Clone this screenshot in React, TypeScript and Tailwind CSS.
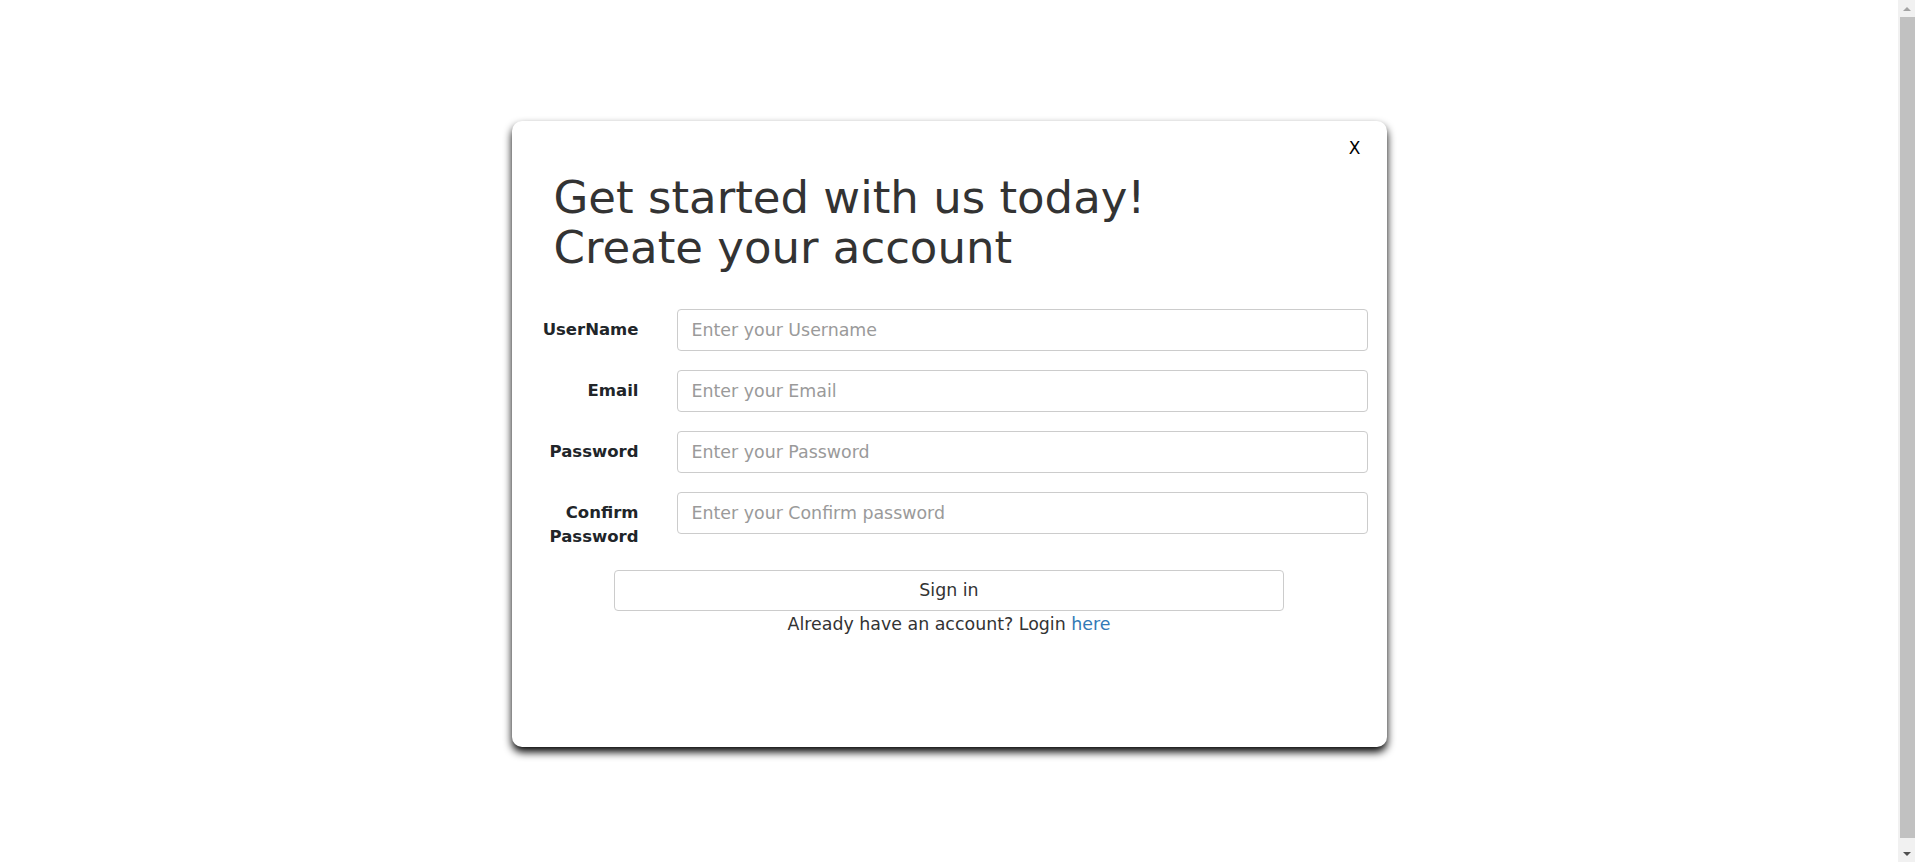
import React from "react";

const font = { fontFamily: '"DejaVu Sans", "Noto Sans", sans-serif' };

function Field({ label, placeholder }: { label: React.ReactNode; placeholder: string }) {
  return (
    <div className="flex items-start gap-[38px]">
      <label className="w-[108px] shrink-0 pt-[9px] text-right text-[16.5px] font-bold leading-[24px] text-[#212529]">
        {label}
      </label>
      <input
        className="h-[42px] flex-1 rounded-[4px] border border-[#cccccc] bg-white pl-[14px] pr-3 text-[17.4px] text-[#333] outline-none placeholder:text-[#9a9a9a]"
        placeholder={placeholder}
      />
    </div>
  );
}

function Scrollbar() {
  return (
    <div className="flex h-full w-[17px] shrink-0 flex-col bg-[#f1f1f1]">
      <div className="flex h-[17px] items-center justify-center">
        <div className="h-0 w-0 border-x-[4px] border-b-[4px] border-x-transparent border-b-[#a3a3a3]" />
      </div>
      <div className="flex-1 pb-[7px] pl-[2px]">
        <div className="h-full w-full bg-[#c1c1c1]" />
      </div>
      <div className="flex h-[17px] items-center justify-center">
        <div className="h-0 w-0 border-x-[4px] border-t-[4px] border-x-transparent border-t-[#505050]" />
      </div>
    </div>
  );
}

export default function App() {
  return (
    <div className="flex h-[862px] w-full overflow-hidden bg-white" style={font}>
      <main className="flex flex-1 justify-center pt-[121px]">
        <div className="flex h-[626px] w-[875px] flex-col rounded-[10px] bg-white px-[19px] pt-[15px] shadow-[0_5px_9px_rgba(0,0,0,1)]">
          <div className="flex justify-end pr-[7px]">
            <button className="text-[17px] leading-[24px] text-black">X</button>
          </div>
          <h1 className="mt-[13px] pl-[23px] text-[45px] font-normal leading-[50px] text-[#333]">
            Get started with us today!
            <br />
            Create your account
          </h1>
          <form className="mt-[36px] flex flex-col gap-[19px]">
            <Field label="UserName" placeholder="Enter your Username" />
            <Field label="Email" placeholder="Enter your Email" />
            <Field label="Password" placeholder="Enter your Password" />
            <Field label="Confirm Password" placeholder="Enter your Confirm password" />
          </form>
          <div className="mt-[21px] flex flex-col items-center">
            <button className="h-[41px] w-[670px] rounded-[4px] border border-[#cccccc] bg-white text-[17.4px] text-[#333]">
              Sign in
            </button>
            <p className="text-[17.4px] leading-[26px] text-[#333]">
              Already have an account? Login <a className="text-[#337ab7]">here</a>
            </p>
          </div>
        </div>
      </main>
      <Scrollbar />
    </div>
  );
}
